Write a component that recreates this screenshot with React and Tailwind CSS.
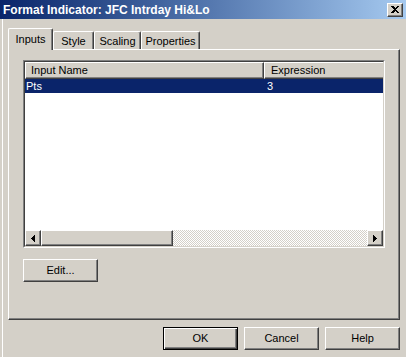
import React from 'react';

const bevel =
  'border-t border-l border-t-white border-l-white border-r border-b border-r-[#404040] border-b-[#404040] shadow-[inset_-1px_-1px_#808080]';

function Button({ label, isDefault }) {
  if (isDefault) {
    return (
      <div className="w-[75px] h-[23px] border border-black">
        <div className="w-full h-full flex items-center justify-center shadow-[inset_1px_1px_#ffffff,inset_-1px_-1px_#404040,inset_-2px_-2px_#808080]">
          {label}
        </div>
      </div>
    );
  }
  return (
    <div className={`w-[75px] h-[23px] flex items-center justify-center ${bevel}`}>
      {label}
    </div>
  );
}

function Arrow({ dir }) {
  return (
    <div className={`w-[16px] h-[16px] flex items-center justify-center ${bevel}`}>
      <svg width="4" height="7" viewBox="0 0 4 7" shapeRendering="crispEdges">
        {dir === 'left' ? (
          <path d="M4 0 L0 3.5 L4 7 Z" fill="#000" />
        ) : (
          <path d="M0 0 L4 3.5 L0 7 Z" fill="#000" />
        )}
      </svg>
    </div>
  );
}

export default function App() {
  const tabs = [
    { label: 'Inputs', w: 'w-[45px]', active: true },
    { label: 'Style', w: 'w-[41px]' },
    { label: 'Scaling', w: 'w-[47px]' },
    { label: 'Properties', w: 'w-[59px]' },
  ];

  return (
    <div
      className="w-[406px] h-[357px] bg-[#d4d0c8] flex flex-col overflow-hidden text-[11px] text-black leading-none"
      style={{ fontFamily: '"Liberation Sans", Arial, sans-serif' }}
    >
      {/* Title bar */}
      <div className="h-[19px] flex items-center bg-gradient-to-r from-[#0a246a] to-[#a6caf0] pl-[3px] pr-[3px]">
        <span className="text-white font-bold text-[12px] flex-1">Format Indicator: JFC Intrday Hi&amp;Lo</span>
        <div className={`w-[16px] h-[14px] bg-[#d4d0c8] flex items-center justify-center ${bevel}`}>
          <svg width="8" height="7" viewBox="0 0 8 7" shapeRendering="crispEdges">
            <path d="M0 0 L2 0 L4 2 L6 0 L8 0 L5 3.5 L8 7 L6 7 L4 5 L2 7 L0 7 L3 3.5 Z" fill="#000" />
          </svg>
        </div>
      </div>

      {/* Body */}
      <div className="flex-1 ml-[2px] border-l border-white pl-[5px] pr-[6px] pt-[9px] flex flex-col">
        {/* Tabs */}
        <div className="h-[21px] flex items-end">
          {tabs.map((t) =>
            t.active ? (
              <div
                key={t.label}
                className={`${t.w} h-[22px] -mb-px relative z-10 bg-[#d4d0c8] border-t border-l border-white border-r border-r-[#404040] shadow-[inset_-1px_0_#808080] rounded-tl-[2px] rounded-tr-[2px] flex justify-center pt-[5px]`}
              >
                {t.label}
              </div>
            ) : (
              <div
                key={t.label}
                className={`${t.w} h-[18px] border-t border-l border-white border-r border-r-[#404040] shadow-[inset_-1px_0_#808080] rounded-tl-[2px] rounded-tr-[2px] flex justify-center pt-[4px]`}
              >
                {t.label}
              </div>
            )
          )}
        </div>

        {/* Panel */}
        <div className="w-[392px] h-[271px] border-t border-l border-white border-r border-b border-r-[#404040] border-b-[#404040] shadow-[inset_-1px_-1px_#808080] pl-[14px] pt-[10px]">
          {/* List view */}
          <div className="w-[362px] h-[188px] border border-t-[#808080] border-l-[#808080] border-r-white border-b-white">
            <div className="w-full h-full border border-t-[#404040] border-l-[#404040] border-r-[#d4d0c8] border-b-[#d4d0c8] bg-white flex flex-col">
              {/* Header */}
              <div className="h-[17px] flex bg-[#d4d0c8]">
                <div className="w-[239px] h-full border-t border-l border-white border-r border-b border-r-[#404040] border-b-[#404040] shadow-[inset_-1px_-1px_#808080] pl-[5px] flex items-center">
                  Input Name
                </div>
                <div className="flex-1 h-full border-t border-l border-white border-b border-b-[#404040] shadow-[inset_0_-1px_#808080] pl-[6px] flex items-center">
                  Expression
                </div>
              </div>
              {/* Row */}
              <div className="h-[14px] flex items-center bg-[#0a246a] text-white">
                <div className="w-[242px] pl-[1px]">Pts</div>
                <div>3</div>
              </div>
              <div className="flex-1" />
              {/* Scrollbar */}
              <div className="h-[16px] flex bg-[#d4d0c8]">
                <Arrow dir="left" />
                <div className={`w-[132px] h-full ${bevel}`} />
                <div className="flex-1 h-full bg-[repeating-conic-gradient(#d4d0c8_0%_25%,#ffffff_0%_50%)] bg-[length:2px_2px]" />
                <Arrow dir="right" />
              </div>
            </div>
          </div>

          {/* Edit button */}
          <div className="mt-[11px]">
            <Button label="Edit..." />
          </div>
        </div>

        {/* Bottom buttons */}
        <div className="mt-[7px] w-[392px] flex justify-end gap-[6px]">
          <Button label="OK" isDefault />
          <Button label="Cancel" />
          <Button label="Help" />
        </div>
      </div>
    </div>
  );
}
